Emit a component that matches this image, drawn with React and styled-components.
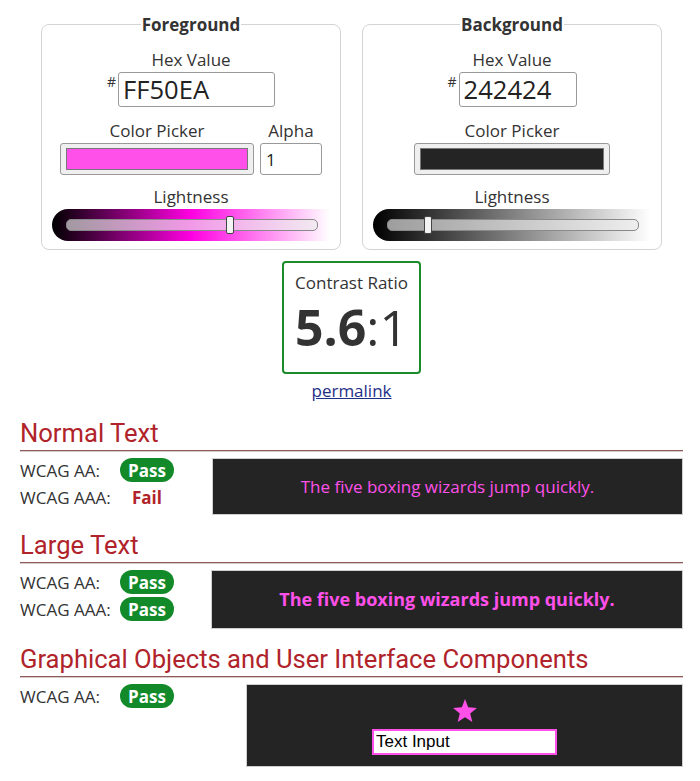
import styled, { createGlobalStyle } from "styled-components";

const GlobalStyle = createGlobalStyle`
  body {
    margin: 0;
    background: #fff;
    font-family: "Open Sans", "DejaVu Sans", sans-serif;
    color: #333;
  }
`;

const colors = [
  {
    title: "Foreground",
    hex: "FF50EA",
    swatch: "#ff50ea",
    hexWidth: 157,
    alpha: true,
    lightness: 0.657,
    gradient: "linear-gradient(to right, hsl(307,100%,0%), hsl(307,100%,50%), hsl(307,100%,100%))",
  },
  {
    title: "Background",
    hex: "242424",
    swatch: "#242424",
    hexWidth: 118,
    alpha: false,
    lightness: 0.15,
    gradient: "linear-gradient(to right, #000, #808080, #fff)",
  },
];

function App() {
  return (
    <Page>
      <GlobalStyle />
      <Pickers>
        {colors.map((c) => (
          <ColorSet key={c.title}>
            <Legend>{c.title}</Legend>
            <Label>Hex Value</Label>
            <HexRow>
              <Hash>#</Hash>
              <HexInput $width={c.hexWidth} defaultValue={c.hex} />
            </HexRow>
            <PickerRow>
              <PickerCol>
                <Label>Color Picker</Label>
                <Swatch $wide={!c.alpha}>
                  <SwatchFill $color={c.swatch} />
                </Swatch>
              </PickerCol>
              {c.alpha && (
                <PickerCol>
                  <Label>Alpha</Label>
                  <AlphaInput defaultValue="1" />
                </PickerCol>
              )}
            </PickerRow>
            <Label $top={11}>Lightness</Label>
            <Slider $gradient={c.gradient}>
              <Track />
              <Thumb style={{ left: 14 + c.lightness * 244 }} />
            </Slider>
          </ColorSet>
        ))}
      </Pickers>

      <RatioBox>
        <RatioTitle>Contrast Ratio</RatioTitle>
        <RatioValue>
          <b>5.6</b>:1
        </RatioValue>
      </RatioBox>
      <Permalink href="#">permalink</Permalink>

      <Section>
        <Heading>Normal Text</Heading>
        <Result $side={192}>
          <Checks>
            <Check>
              <CheckLabel>WCAG AA:</CheckLabel>
              <Badge $pass>Pass</Badge>
            </Check>
            <Check>
              <CheckLabel>WCAG AAA:</CheckLabel>
              <Badge>Fail</Badge>
            </Check>
          </Checks>
          <Sample>The five boxing wizards jump quickly.</Sample>
        </Result>
      </Section>

      <Section>
        <Heading>Large Text</Heading>
        <Result $side={191}>
          <Checks>
            <Check>
              <CheckLabel>WCAG AA:</CheckLabel>
              <Badge $pass>Pass</Badge>
            </Check>
            <Check>
              <CheckLabel>WCAG AAA:</CheckLabel>
              <Badge $pass>Pass</Badge>
            </Check>
          </Checks>
          <Sample $large>The five boxing wizards jump quickly.</Sample>
        </Result>
      </Section>

      <Section>
        <Heading>Graphical Objects and User Interface Components</Heading>
        <Result $side={226}>
          <Checks>
            <Check>
              <CheckLabel>WCAG AA:</CheckLabel>
              <Badge $pass>Pass</Badge>
            </Check>
          </Checks>
          <UiSample>
            <svg width="26" height="26" viewBox="0 0 24 24">
              <polygon
                fill="#ff50ea"
                points="12,1 14.9,8.6 23,9.2 16.8,14.3 18.8,22.2 12,17.8 5.2,22.2 7.2,14.3 1,9.2 9.1,8.6"
              />
            </svg>
            <UiInput defaultValue="Text Input" />
          </UiSample>
        </Result>
      </Section>
    </Page>
  );
}

const Page = styled.div`
  width: 663px;
  margin-left: 20px;
  padding-top: 13px;
  display: flex;
  flex-direction: column;
  align-items: center;
`;

const Pickers = styled.div`
  display: flex;
  gap: 21px;
`;

const ColorSet = styled.fieldset`
  width: 300px;
  box-sizing: border-box;
  margin: 0;
  padding: 13px 9px 8px;
  border: 1px solid #d4d4d4;
  border-radius: 8px;
  display: flex;
  flex-direction: column;
  align-items: center;
`;

const Legend = styled.legend`
  margin: 0 auto;
  padding: 0 1px;
  font-weight: 700;
  font-size: 17px;
  line-height: 23px;
  color: #333;
`;

const Label = styled.div`
  font-size: 17px;
  line-height: 22px;
  margin-top: ${(p) => p.$top || 0}px;
  margin-bottom: 1px;
  text-align: center;
  color: #333;
`;

const HexRow = styled.div`
  display: flex;
  align-items: flex-start;
  gap: 2px;
`;

const Hash = styled.span`
  font-size: 14px;
  line-height: 14px;
  margin-top: 3px;
`;

const HexInput = styled.input`
  width: ${(p) => p.$width}px;
  height: 35px;
  box-sizing: border-box;
  border: 1px solid #999;
  border-radius: 3px;
  padding: 0 4px;
  font-family: "Open Sans", sans-serif;
  font-size: 25.6px;
  color: #222;
  background: #fff;
`;

const PickerRow = styled.div`
  display: flex;
  gap: 6px;
  margin-top: 13px;
`;

const PickerCol = styled.div`
  display: flex;
  flex-direction: column;
  align-items: center;
`;

const Swatch = styled.div`
  width: ${(p) => (p.$wide ? 196 : 194)}px;
  height: 32px;
  box-sizing: border-box;
  border: 1px solid #999;
  border-radius: 3px;
  background: #efefef;
  padding: 4px 5px;
`;

const SwatchFill = styled.div`
  height: 100%;
  background: ${(p) => p.$color};
  border: 1px solid #777;
  box-sizing: border-box;
`;

const AlphaInput = styled.input`
  width: 62px;
  height: 32px;
  box-sizing: border-box;
  border: 1px solid #999;
  border-radius: 3px;
  padding: 0 5px;
  font-family: "Open Sans", sans-serif;
  font-size: 17px;
  color: #222;
`;

const Slider = styled.div`
  position: relative;
  width: 278px;
  height: 32px;
  border-radius: 16px 0 0 16px;
  background: ${(p) => p.$gradient};
  display: flex;
  align-items: center;
  padding: 0 12px 0 14px;
  box-sizing: border-box;
`;

const Track = styled.div`
  flex: 1;
  height: 10px;
  border-radius: 5px;
  border: 1px solid #8a8a8a;
  background: rgba(235, 235, 235, 0.65);
`;

const Thumb = styled.div`
  position: absolute;
  top: 7px;
  width: 8px;
  height: 18px;
  box-sizing: border-box;
  background: #f4f4f4;
  border: 1px solid #444;
  border-radius: 2px;
`;

const RatioBox = styled.div`
  margin-top: 11px;
  width: 139px;
  height: 113px;
  box-sizing: border-box;
  border: 2px solid #1d8a2c;
  border-radius: 4px;
  display: flex;
  flex-direction: column;
  align-items: center;
  padding-top: 9px;
`;

const RatioTitle = styled.div`
  font-size: 17px;
  line-height: 22px;
  color: #333;
`;

const RatioValue = styled.div`
  font-size: 50px;
  line-height: 58px;
  margin-top: 4px;
  color: #333;
  b {
    font-weight: 700;
  }
`;

const Permalink = styled.a`
  margin-top: 6px;
  font-size: 17px;
  line-height: 22px;
  color: #1f2f86;
  text-decoration: underline;
`;

const Section = styled.section`
  align-self: stretch;
  margin-top: 16px;
  & + & {
    margin-top: 15px;
  }
`;

const Heading = styled.h2`
  margin: 0;
  font-family: Roboto, "Liberation Sans", sans-serif;
  font-weight: 400;
  font-size: 25.6px;
  line-height: 30px;
  color: #b0232a;
  padding-bottom: 2px;
  border-bottom: 1px solid #8f5a5a;
  box-shadow: 0 1px 0 #d9c9c9;
`;

const Result = styled.div`
  display: grid;
  grid-template-columns: ${(p) => p.$side}px 1fr;
  align-items: start;
  margin-top: 7px;
`;

const Checks = styled.div`
  display: flex;
  flex-direction: column;
  gap: 3px;
`;

const Check = styled.div`
  display: flex;
  align-items: center;
  height: 24px;
`;

const CheckLabel = styled.span`
  width: 100px;
  font-size: 17px;
  color: #333;
`;

const Badge = styled.span`
  width: 54px;
  height: 24px;
  border-radius: 12px;
  display: flex;
  align-items: center;
  justify-content: center;
  font-weight: 700;
  font-size: 17px;
  color: ${(p) => (p.$pass ? "#fff" : "#b0232a")};
  background: ${(p) => (p.$pass ? "#138a2a" : "transparent")};
`;

const Sample = styled.div`
  background: #242424;
  border: 1px solid #cfcfcf;
  color: #ff50ea;
  text-align: center;
  font-size: ${(p) => (p.$large ? "18px" : "17px")};
  font-weight: ${(p) => (p.$large ? 700 : 400)};
  line-height: ${(p) => (p.$large ? "25px" : "23px")};
  padding: 16px 10px;
`;

const UiSample = styled.div`
  background: #242424;
  border: 1px solid #cfcfcf;
  display: flex;
  flex-direction: column;
  align-items: center;
  gap: 5px;
  padding: 13px 0 11px;
`;

const UiInput = styled.input`
  width: 185px;
  height: 26px;
  box-sizing: border-box;
  border: 2px solid #ff50ea;
  background: #fff;
  padding: 0 2px;
  font-family: "Liberation Sans", Arial, sans-serif;
  font-size: 17px;
  color: #000;
`;

export default App;
